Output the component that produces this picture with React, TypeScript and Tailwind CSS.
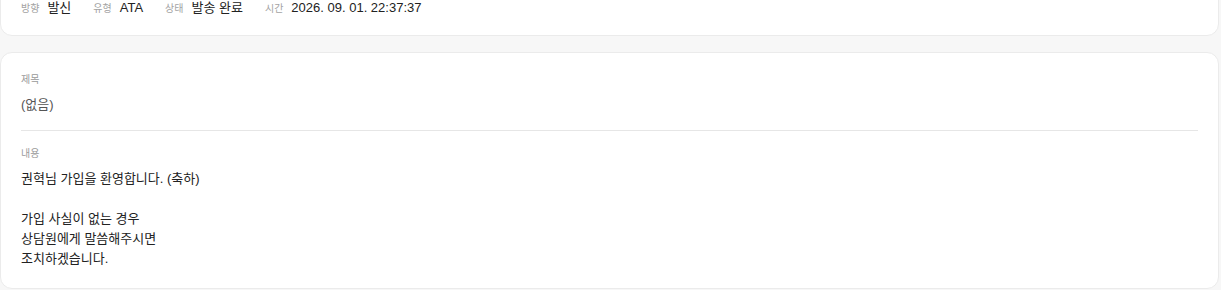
import React from 'react';

const meta = [
  { label: '방향', value: '발신' },
  { label: '유형', value: 'ATA' },
  { label: '상태', value: '발송 완료' },
  { label: '시간', value: '2026. 09. 01. 22:37:37' },
];

const body = ['권혁님 가입을 환영합니다. (축하)', '', '가입 사실이 없는 경우', '상담원에게 말씀해주시면', '조치하겠습니다.'];

export default function App() {
  return (
    <div
      className="min-h-screen bg-[#f7f7f7] overflow-hidden"
      style={{ fontFamily: '"Liberation Sans", "Noto Sans CJK KR", sans-serif' }}
    >
      <div className="w-[1219px] flex flex-col gap-4">
        {/* Summary card (scrolled off the top) */}
        <div className="-mt-[22px] bg-white border border-[#ebebeb] rounded-xl px-5 pt-5 pb-[18px]">
          <div className="flex items-center gap-[22px] h-[18px]">
            {meta.map(({ label, value }) => (
              <div key={label} className="flex items-center gap-2">
                <span className="text-[10px] text-[#a3a3a3]">{label}</span>
                <span className="text-[13px] text-[#222]">{value}</span>
              </div>
            ))}
          </div>
        </div>

        {/* Message card */}
        <div className="bg-white border border-[#ebebeb] rounded-xl px-5 pt-5 pb-[19px]">
          <div className="text-[10px] leading-[14px] text-[#9a9a9a]">제목</div>
          <div className="mt-2 text-[13px] leading-5 text-[#555]">(없음)</div>
          <div className="mt-[15px] h-px bg-[#e6e6e6]" />
          <div className="mt-4 text-[10px] leading-[14px] text-[#9a9a9a]">내용</div>
          <div className="mt-[8px] text-[13px] leading-5 text-[#222]">
            {body.map((line, i) => (
              <div key={i} className="h-5">
                {line}
              </div>
            ))}
          </div>
        </div>
      </div>
    </div>
  );
}
